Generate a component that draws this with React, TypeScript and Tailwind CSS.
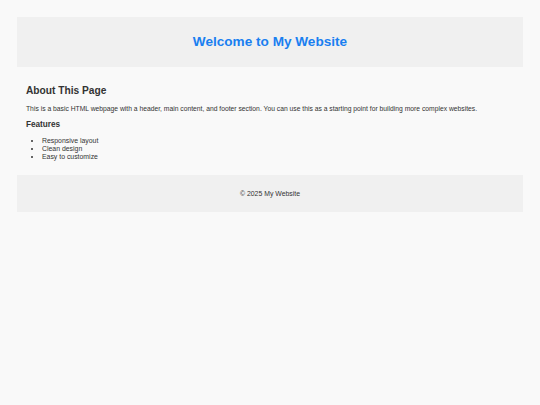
export default function App() {
  return (
    <div className="min-h-screen bg-[#f9f9f9] p-[17px] text-[#333] font-['Liberation_Sans',Arial,sans-serif]">
      <header className="h-[50px] bg-[#f0f0f0] flex items-center justify-center">
        <h1 className="text-[13.6px] font-bold text-[#1a7ff0] leading-none">Welcome to My Website</h1>
      </header>
      <main className="h-[108px] px-[9px] pt-[17px]">
        <h2 className="text-[10.2px] font-bold leading-[14px]">About This Page</h2>
        <p className="mt-[6px] text-[6.75px] leading-[9px]">
          This is a basic HTML webpage with a header, main content, and footer section. You can use this as a starting point for building more complex websites.
        </p>
        <h3 className="mt-[6px] text-[8.2px] font-bold leading-[11px]">Features</h3>
        <ul className="mt-[7px] list-disc pl-[16px] text-[6.9px] leading-[8px]">
          <li>Responsive layout</li>
          <li>Clean design</li>
          <li>Easy to customize</li>
        </ul>
      </main>
      <footer className="h-[37px] bg-[#f0f0f0] flex items-center justify-center pt-[2px]">
        <p className="text-[6.9px] leading-none">© 2025 My Website</p>
      </footer>
    </div>
  );
}
